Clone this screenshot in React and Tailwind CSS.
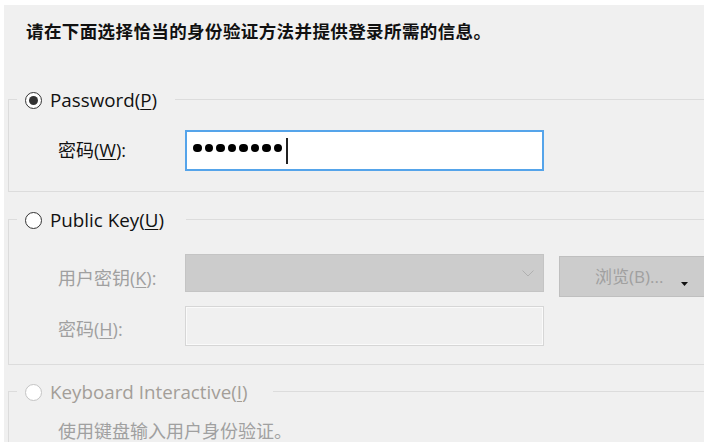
import React from 'react';

const FONT = { fontFamily: '"Open Sans", "Noto Sans CJK SC", sans-serif' };

function Radio({ checked, disabled }) {
  return (
    <span
      className={`w-[17px] h-[17px] rounded-full border flex items-center justify-center shrink-0 bg-white ${
        disabled ? 'border-[#c4c4c4]' : 'border-[#333333]'
      }`}
    >
      {checked && <span className="w-[9px] h-[9px] rounded-full bg-[#333333]" />}
    </span>
  );
}

function Legend({ label, keyChar, checked, disabled, pr }) {
  return (
    <legend className={`ml-[8px] pl-[8px] ${pr} h-[24px] pt-[3px]`}>
      <div className="flex items-center gap-[8px] h-[21px]">
        <Radio checked={checked} disabled={disabled} />
        <span className={`text-[18.8px] leading-[21px] ${disabled ? 'text-[#a39e98]' : 'text-[#111111]'}`}>
          {label}(<span className="underline underline-offset-2">{keyChar}</span>)
        </span>
      </div>
    </legend>
  );
}

export default function App() {
  return (
    <div className="w-[704px] h-[442px] overflow-hidden bg-white pt-[5px] pl-[4px]" style={FONT}>
      <div className="h-full bg-[#f0f0f0] overflow-hidden">
        <div className="pt-[14px] pl-[22px] text-[17.5px] leading-[24px] font-bold text-[#111111] whitespace-nowrap tracking-[0.4px]">
          请在下面选择恰当的身份验证方法并提供登录所需的信息。
        </div>

        {/* Password */}
        <fieldset className="mt-[44px] ml-[4px] w-[720px] border border-[#dcdcdc] p-0 pb-[20px]">
          <Legend label="Password" keyChar="P" checked pr="pr-[18px]" />
          <div className="flex items-center pl-[49px] mt-[19px]">
            <div className="w-[127px] shrink-0 text-[18px] text-[#111111]">
              密码(<span className="underline underline-offset-2">W</span>):
            </div>
            <div className="w-[359px] h-[41px] border-2 border-[#55a4ea] bg-white flex items-center pl-[6px] gap-[3px]">
              {[0, 1, 2, 3, 4, 5, 6, 7].map((i) => (
                <span key={i} className="w-[8.5px] h-[8.5px] rounded-full bg-black -mt-[5px]" />
              ))}
              <span className="w-[2px] h-[26px] bg-[#222] ml-[1px]" />
            </div>
          </div>
        </fieldset>

        {/* Public Key */}
        <fieldset className="mt-[15px] ml-[4px] w-[720px] border border-[#dcdcdc] p-0 pb-[18px]">
          <Legend label="Public Key" keyChar="U" pr="pr-[22px]" />
          <div className="flex pl-[49px] mt-[23px] h-[43px]">
            <div className="w-[127px] shrink-0 text-[18px] leading-[24px] text-[#a0a0a0] mt-[12px] whitespace-nowrap">
              用户密钥(<span className="underline underline-offset-2">K</span>):
            </div>
            <div className="w-[359px] h-[38px] border border-[#c4c4c4] bg-[#cccccc] flex items-center justify-end pr-[9px]">
              <svg width="12" height="7" viewBox="0 0 12 7" fill="none">
                <polyline points="0.5,0.5 6,6 11.5,0.5" stroke="#b0b0b0" strokeWidth="1" />
              </svg>
            </div>
            <div className="ml-[15px] mt-[2px] w-[150px] h-[41px] border border-[#bfbfbf] bg-[#cccccc] flex items-center shrink-0">
              <span className="pl-[35px] text-[17px] text-[#a0a0a0] whitespace-nowrap">浏览(B)...</span>
              <svg className="ml-[18px] mt-[14px]" width="7" height="4" viewBox="0 0 7 4">
                <polygon points="0,0 7,0 3.5,4" fill="#111" />
              </svg>
            </div>
          </div>
          <div className="flex items-center pl-[49px] mt-[9px]">
            <div className="w-[127px] shrink-0 text-[18px] text-[#a0a0a0] mt-[6px]">
              密码(<span className="underline underline-offset-2">H</span>):
            </div>
            <div className="w-[359px] h-[40px] border border-[#d6d6d6] bg-[#f0f0f0] shadow-[inset_0_0_0_1px_#fafafa]" />
          </div>
        </fieldset>

        {/* Keyboard Interactive */}
        <fieldset className="mt-[14px] ml-[4px] w-[720px] border border-[#dcdcdc] p-0 pb-[20px]">
          <Legend label="Keyboard Interactive" keyChar="I" disabled pr="pr-[25px]" />
          <div className="pl-[49px] mt-[16px] text-[18px] leading-[24px] text-[#a0a0a0]">
            使用键盘输入用户身份验证。
          </div>
        </fieldset>
      </div>
    </div>
  );
}
